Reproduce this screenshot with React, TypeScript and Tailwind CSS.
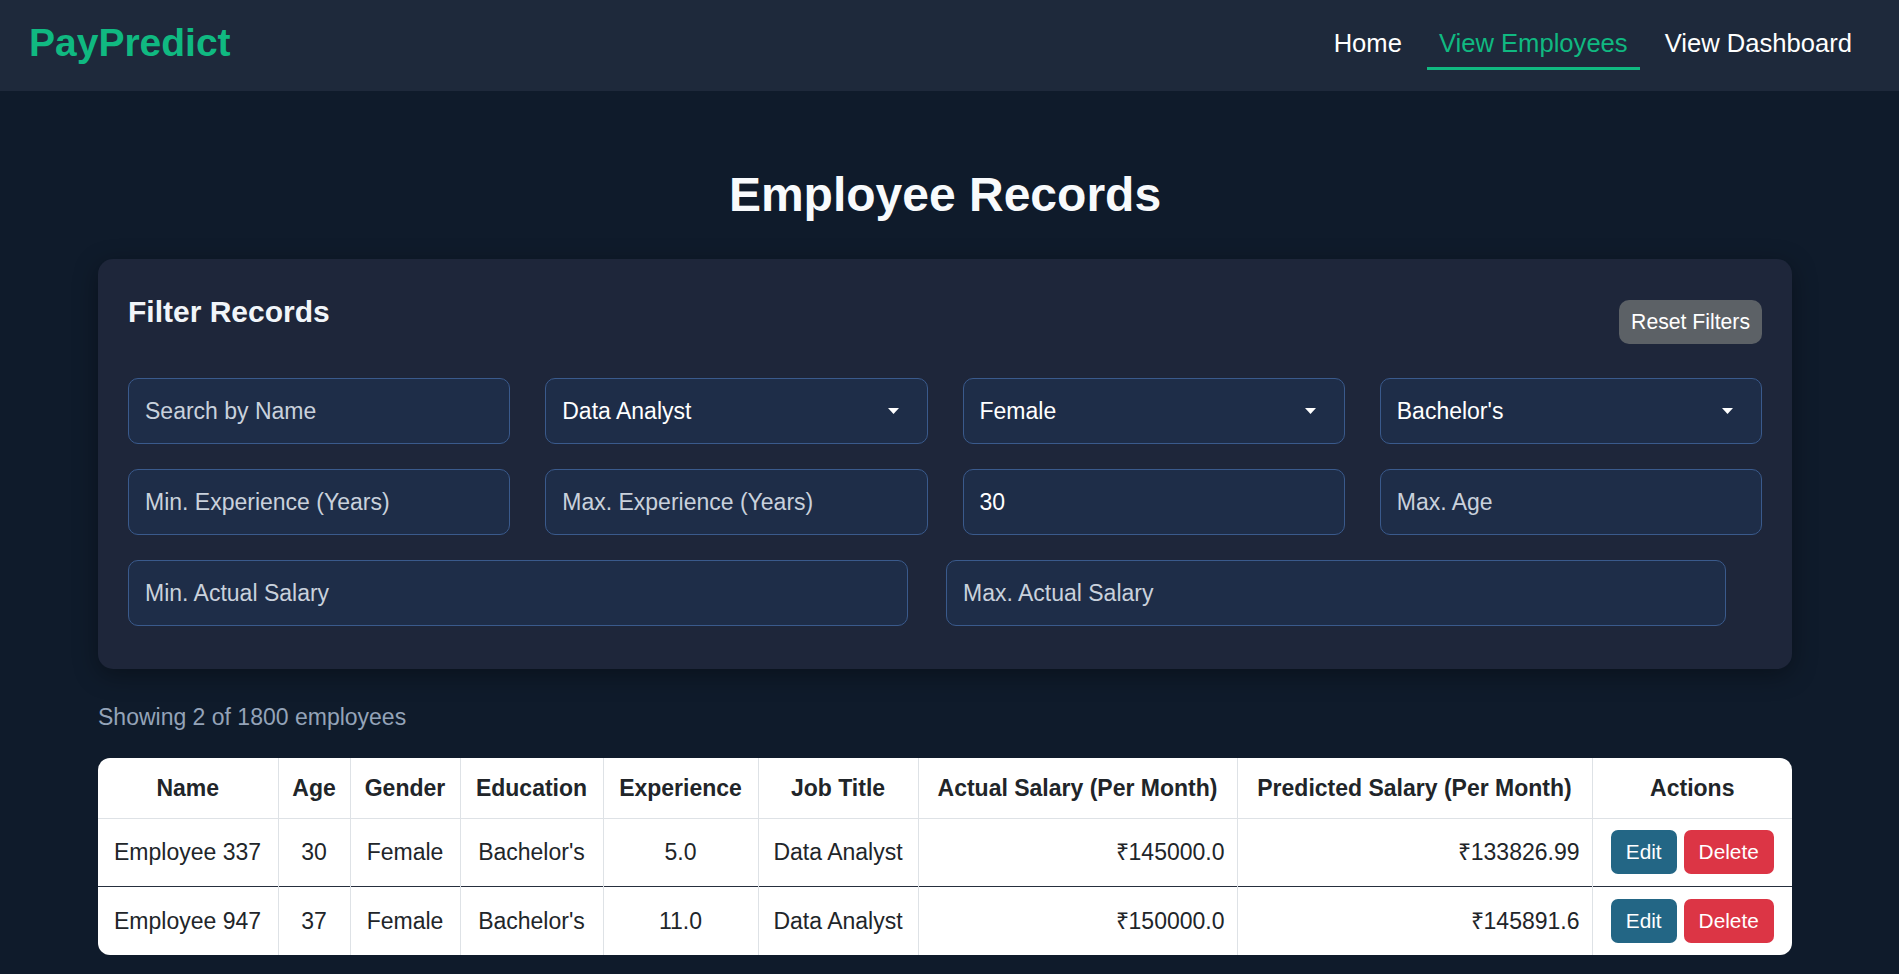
import React from 'react';

type Employee = {
  name: string;
  age: number;
  gender: string;
  education: string;
  experience: string;
  jobTitle: string;
  actual: string;
  predicted: string;
};

const EMPLOYEES: Employee[] = [
  { name: 'Employee 337', age: 30, gender: 'Female', education: "Bachelor's", experience: '5.0', jobTitle: 'Data Analyst', actual: '₹145000.0', predicted: '₹133826.99' },
  { name: 'Employee 947', age: 37, gender: 'Female', education: "Bachelor's", experience: '11.0', jobTitle: 'Data Analyst', actual: '₹150000.0', predicted: '₹145891.6' },
];

const COLUMNS = [
  { label: 'Name', width: 'w-[180px]' },
  { label: 'Age', width: 'w-[72px]' },
  { label: 'Gender', width: 'w-[110px]' },
  { label: 'Education', width: 'w-[143px]' },
  { label: 'Experience', width: 'w-[155px]' },
  { label: 'Job Title', width: 'w-[160px]' },
  { label: 'Actual Salary (Per Month)', width: 'w-[319px]' },
  { label: 'Predicted Salary (Per Month)', width: 'w-[355px]' },
  { label: 'Actions', width: 'w-[200px]' },
];

const fieldBox =
  'h-[66px] w-full rounded-[10px] border border-[#3a5a8c] bg-[#1e2d48] pl-[16px] pr-[28px] text-[23px] leading-[26px] outline-none';

const TextField = ({ placeholder, value }: { placeholder: string; value?: string }) => (
  <input
    readOnly
    defaultValue={value}
    placeholder={placeholder}
    className={`${fieldBox} text-white placeholder:text-[#c9d1dc]`}
  />
);

const SelectField = ({ value }: { value: string }) => (
  <div className={`${fieldBox} flex items-center justify-between text-white`}>
    <span>{value}</span>
    <svg width="11" height="6" viewBox="0 0 11 6" className="fill-white">
      <path d="M0 0h11L5.5 6z" />
    </svg>
  </div>
);

const NavLink = ({ label, active }: { label: string; active?: boolean }) => (
  <a
    className={`px-[12px] pt-[9px] pb-[10px] text-[25.6px] leading-[25.6px] border-b-[3px] ${
      active ? 'text-[#10b981] border-[#10b981]' : 'text-white border-transparent'
    }`}
  >
    {label}
  </a>
);

export default function App() {
  return (
    <div className="min-h-screen bg-[#0f1b2b] font-['Liberation_Sans',Arial,sans-serif] pb-10">
      <nav className="h-[91px] bg-[#1e293b] flex items-start justify-between pl-[29px] pr-[35px]">
        <span className="mt-[23px] text-[39px] leading-[39px] font-bold text-[#10b981]">PayPredict</span>
        <div className="mt-[22px] flex gap-[13px]">
          <NavLink label="Home" />
          <NavLink label="View Employees" active />
          <NavLink label="View Dashboard" />
        </div>
      </nav>

      <main className="ml-[98px] w-[1694px]">
        <h1 className="mt-[80px] mb-[40px] text-center text-[48px] leading-[48px] font-bold text-[#f8fafc]">
          Employee Records
        </h1>

        <section className="rounded-[15px] bg-[#1e263a] px-[30px] pt-[30px] pb-[43px] shadow-[0_6px_24px_rgba(0,0,0,0.35)]">
          <div className="flex items-start justify-between">
            <h2 className="mt-[8px] text-[30px] leading-[30px] font-bold text-[#f1f5f9]">Filter Records</h2>
            <button className="mt-[11px] h-[44px] rounded-[10px] bg-[#5c6166] px-[12px] text-[21.2px] text-white">
              Reset Filters
            </button>
          </div>

          <div className="mt-[34px] grid grid-cols-4 gap-x-[35px] gap-y-[25px]">
            <TextField placeholder="Search by Name" />
            <SelectField value="Data Analyst" />
            <SelectField value="Female" />
            <SelectField value="Bachelor's" />
            <TextField placeholder="Min. Experience (Years)" />
            <TextField placeholder="Max. Experience (Years)" />
            <TextField placeholder="Min. Age" value="30" />
            <TextField placeholder="Max. Age" />
            <div className="col-span-4 grid w-[1598px] grid-cols-2 gap-x-[38px]">
              <TextField placeholder="Min. Actual Salary" />
              <TextField placeholder="Max. Actual Salary" />
            </div>
          </div>
        </section>

        <p className="mt-[37px] mb-[29px] text-[23px] leading-[23px] text-[#94a3b8]">Showing 2 of 1800 employees</p>

        <div className="overflow-hidden rounded-[12px] bg-white">
          <table className="w-full table-fixed border-collapse text-[23px] text-[#212529]">
            <colgroup>
              {COLUMNS.map(c => (
                <col key={c.label} className={c.width} />
              ))}
            </colgroup>
            <thead>
              <tr className="h-[60px] border-b border-[#dee2e6]">
                {COLUMNS.map((c, i) => (
                  <th
                    key={c.label}
                    className={`font-bold text-center px-[6px] ${i < COLUMNS.length - 1 ? 'border-r border-[#dee2e6]' : ''}`}
                  >
                    {c.label}
                  </th>
                ))}
              </tr>
            </thead>
            <tbody>
              {EMPLOYEES.map((e, idx) => (
                <tr key={e.name} className={idx === 0 ? 'h-[68px] border-b border-[#262f3e]' : 'h-[69px]'}>
                  <td className="border-r border-[#dee2e6] pl-[16px] text-left">{e.name}</td>
                  <td className="border-r border-[#dee2e6] text-center">{e.age}</td>
                  <td className="border-r border-[#dee2e6] text-center">{e.gender}</td>
                  <td className="border-r border-[#dee2e6] text-center">{e.education}</td>
                  <td className="border-r border-[#dee2e6] text-center">{e.experience}</td>
                  <td className="border-r border-[#dee2e6] text-center">{e.jobTitle}</td>
                  <td className="border-r border-[#dee2e6] pr-[12px] text-right">{e.actual}</td>
                  <td className="border-r border-[#dee2e6] pr-[12px] text-right">{e.predicted}</td>
                  <td>
                    <div className="flex justify-center gap-[7px]">
                      <button className="h-[44px] rounded-[7px] bg-[#236685] px-[15px] text-[20.8px] text-white">Edit</button>
                      <button className="h-[44px] rounded-[7px] bg-[#dc3545] px-[15px] text-[20.8px] text-white">Delete</button>
                    </div>
                  </td>
                </tr>
              ))}
            </tbody>
          </table>
        </div>
      </main>
    </div>
  );
}
